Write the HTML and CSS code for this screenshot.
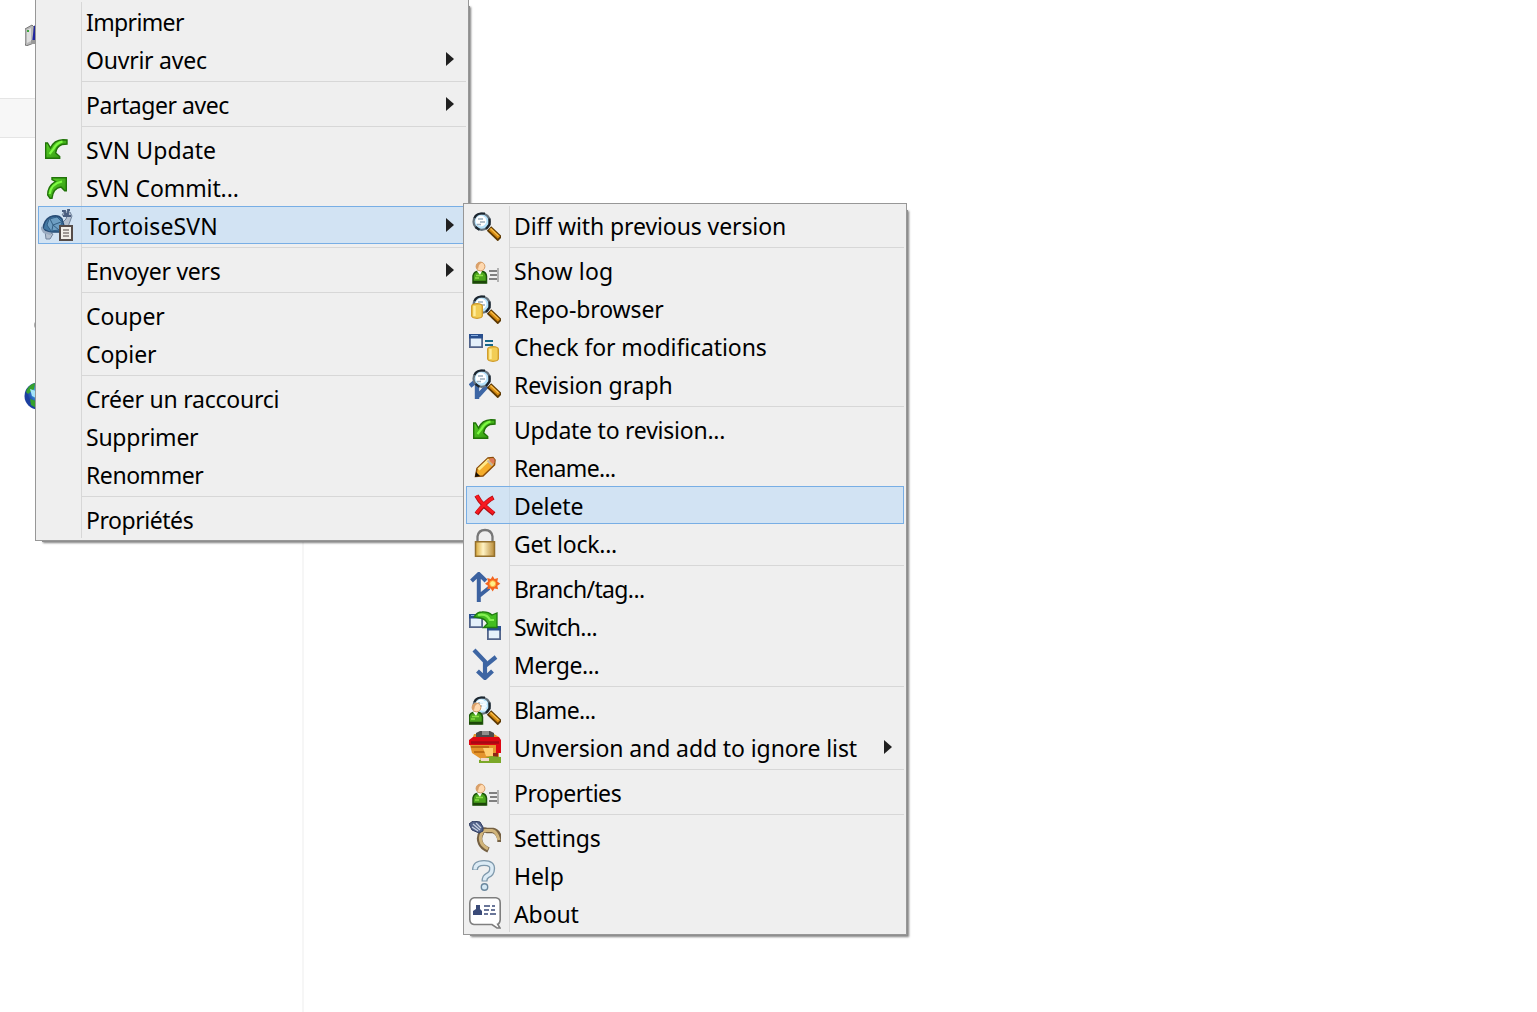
FILE: index.html
```html
<!DOCTYPE html>
<html lang="fr">
<head>
<meta charset="utf-8">
<title>Explorateur</title>
<link rel="stylesheet" href="styles.css">
</head>
<body>
<svg class="defs" width="0" height="0" aria-hidden="true">
  <defs>
    <linearGradient id="gold" x1="0" x2="1"><stop offset="0" stop-color="#d9a93c"/><stop offset=".4" stop-color="#fff3c4"/><stop offset="1" stop-color="#b88a36"/></linearGradient>
    <linearGradient id="leaf" x1="0" x2="1" y1="0" y2="1"><stop offset="0" stop-color="#5fd62c"/><stop offset="1" stop-color="#2b8f0c"/></linearGradient>
    <radialGradient id="globe" cx=".6" cy=".35"><stop offset="0" stop-color="#b9f0ff"/><stop offset=".5" stop-color="#3f9be0"/><stop offset="1" stop-color="#1c3fa0"/></radialGradient>
    <symbol id="lens" viewBox="0 0 32 32">
      <path d="M20 19.500L31 30" stroke="#5d3903" stroke-width="6.400"/>
      <path d="M21 20L30 28.500" stroke="#d68a10" stroke-width="3.400"/>
      <path d="M21.500 19.500L29.500 27" stroke="#f6bd4d" stroke-width="1.200"/>
      <circle cx="12.700" cy="12.700" r="8.200" fill="#b5e2fb" stroke="#66727c" stroke-width="2.200"/>
      <path d="M5.500 9Q7 4.700 12 4.500h4M20.500 9.500v6l-3.500 4.500M6.500 18l4 2.800" fill="none" stroke="#1c262f" stroke-width="2.200"/>
      <circle cx="12" cy="12" r="5.400" fill="#fff"/>
      <path d="M9 10h5M11 13h5M8 15.500h4" stroke="#9badbb" stroke-width="1.300"/>
    </symbol>
    <symbol id="person" viewBox="0 0 32 32">
      <path d="M4 29v-7q1-4 4-4.500h6q3 1 3.500 4.500v7z" fill="#4ba51c" stroke="#1c5608" stroke-width="1.500"/>
      <path d="M4 28h13" stroke="#1c4708" stroke-width="2.500"/>
      <path d="M8 17h5l-2 4z" fill="#fff"/>
      <path d="M7 21.500h7M6 24h4" stroke="#8bdd45" stroke-width="1.700"/>
      <circle cx="11.500" cy="12.500" r="4.400" fill="#ffd9b0" stroke="#d59a62"/>
      <path d="M7 14q-.5-5 4-6h2l-3 3-1 4z" fill="#d9a06a"/>
    </symbol>
    <symbol id="log" viewBox="0 0 32 32">
      <use href="#person" width="32" height="32"/>
      <path d="M20 17h8M21 21h7M20 25h8" stroke="#808080" stroke-width="2"/>
      <path d="M29 14v14" stroke="#b2b2b2" stroke-width="2"/>
    </symbol>
    <symbol id="drum" viewBox="0 0 12 16">
      <path d="M.7 3Q1 1 6 .7Q11 1 11.300 3v10q-.3 2-5.300 2.300Q1 15 .7 13z" fill="#f2cd55" stroke="#cf9a26" stroke-width="1.300"/>
      <path d="M3.500 3v10" stroke="#ffed9c" stroke-width="2.400"/>
    </symbol>
    <symbol id="repo" viewBox="0 0 32 32">
      <use href="#lens" width="32" height="32"/>
      <use href="#drum" x="2" y="11" width="12" height="16"/>
    </symbol>
    <symbol id="win" viewBox="0 0 14 14">
      <path d="M.9.900h12.200v12.200H.9z" fill="#e5f1fb" stroke="#52648a" stroke-width="1.800"/>
      <path d="M0 0h14v4.500H0z" fill="#294f8e"/><path d="M2 1.500h7" stroke="#88aee0"/>
    </symbol>
    <symbol id="check" viewBox="0 0 32 32">
      <use href="#win" y="4" width="14" height="14"/>
      <path d="M16 11h8M16 15h8" stroke="#176789" stroke-width="1.800"/>
      <use href="#drum" x="18" y="16" width="12" height="16"/>
    </symbol>
    <symbol id="graph" viewBox="0 0 32 32">
      <path d="M1 18L7 13M8 11v20M9 28L18 18" fill="none" stroke="#3d66a5" stroke-width="4.400"/>
      <use href="#lens" y="-2" width="32" height="32"/>
    </symbol>
    <symbol id="down" viewBox="0 0 32 32">
      <path d="M4.700 10v15.300h14v-1.800l-4-3.500q.5-6.500 6.300-8.500l5-.5V7l-4-.3Q13 7 9.500 15l-3-5z" fill="url(#leaf)" stroke="#207308" stroke-width="1.400"/>
      <path d="M8.500 21l4-5q3-6 9-7.500" fill="none" stroke="#7dfa42" stroke-width="2.200"/>
    </symbol>
    <symbol id="up" viewBox="0 0 32 32">
      <path d="M11 6.700h14.300v13h-1.600L20 16q-8 1-9 11.300H9L6.700 24q-.2-9 7.800-13.500l-3.500-2z" fill="url(#leaf)" stroke="#207308" stroke-width="1.400"/>
      <path d="M8.700 23q1-10 12.300-12.500" fill="none" stroke="#7dfa42" stroke-width="2.200"/>
    </symbol>
    <symbol id="turtle" viewBox="0 0 32 32">
      <path d="M4 22l1 8h4l3-5zM19 16l6-6 1-3-5-1 2-3h6l2 4-3 8-2 8z" fill="#b4c0cf" stroke="#70839c"/>
      <path d="M21 2h3v3h3V1h2M22 7h8" fill="none" stroke="#4b5f80" stroke-width="1.800"/>
      <path d="M2 20q1-9 7-12 8-3 12 2l2 7-4 6H8z" fill="#4379a4" stroke="#284d76" stroke-width="1.500"/>
      <path d="M8 10l8-2 5 5-3 8-8 1-4-6z" fill="#6e9fc3" stroke="#315f88"/>
      <path d="M9 10l3 6 8-3M12 16l-1 5M12 16l6 5" fill="none" stroke="#345f83"/>
      <path d="M0 18l3 5 7 2" fill="none" stroke="#9aabc0" stroke-width="2.400"/>
      <path d="M19 17h12v14H19z" fill="#f1eee8" stroke="#554c49" stroke-width="2"/>
      <path d="M22 21h6M22 24h6M22 27h6" stroke="#827b77" stroke-width="1.400"/>
    </symbol>
    <symbol id="pencil" viewBox="0 0 32 32">
      <path d="M6.500 25.500l1.500-8L19 7l5-.5 2 2.500-.5 5L14 25z" fill="#f4ac2b" stroke="#8a4b08" stroke-width="1.500"/>
      <path d="M9.500 18.500L20 8.500" stroke="#ffe98a" stroke-width="3"/>
      <path d="M20 9l4 4 1.500-1.500V8L24 7l-3 .5z" fill="#dd7a58"/><path d="M18.500 9.500l5 5" stroke="#c3b3a4" stroke-width="2"/>
      <path d="M6 26l1-5 4 4z" fill="#17100a"/>
    </symbol>
    <symbol id="cross" viewBox="0 0 32 32">
      <path d="M7.500 6.500q3 6 8 10.500t9.500 8M24.500 8.500Q17 12 7.500 25" fill="none" stroke="#b00c12" stroke-width="4.600"/>
      <path d="M7.500 6.500q3 5.500 8 10t9 7.500M24 9Q17 12 7.500 24" fill="none" stroke="#f71920" stroke-width="3"/>
    </symbol>
    <symbol id="lock" viewBox="0 0 32 32">
      <path d="M8.500 15V9.500q1-6.500 7.500-6.500t7.500 6.500V15" fill="none" stroke="#777" stroke-width="2.300"/>
      <path d="M6.500 14.700h19v14.600h-19z" fill="url(#gold)" stroke="#94702d" stroke-width="1.500"/>
    </symbol>
    <symbol id="branch" viewBox="0 0 32 32">
      <path d="M9.800 30V3M2.500 9L9.800 2 17 9M10 24l10-8" fill="none" stroke="#3c62a0" stroke-width="4"/>
      <path d="M23.700 4l1.800 3 3.600-1-.8 3.500 3 2.200-3 2 .8 3.600-3.600-.8-1.800 3-2-3-3.500.8.8-3.600-3-2 3-2.200-.8-3.500 3.500 1z" fill="#f4651e"/>
      <circle cx="23.700" cy="11.700" r="3" fill="#fff08a" stroke="#ffae37"/>
    </symbol>
    <symbol id="switch" viewBox="0 0 32 32">
      <use href="#win" y="4" width="14" height="14"/><use href="#win" x="18" y="16" width="14" height="14"/>
      <path d="M5 7q3-5 8-5 6-.5 10 3l5-2v14.500H14.500l4-4q-2-4.500-7-5.500z" fill="#43bd20" stroke="#1f7b10" stroke-width="1.300"/>
      <path d="M9 5q9-2 12 5h4" fill="none" stroke="#85f052" stroke-width="2.200"/>
    </symbol>
    <symbol id="merge" viewBox="0 0 32 32">
      <path d="M5 2l11 11.500V30M27 9L16 18M8.500 23l7.500 7 7.500-7" fill="none" stroke="#3d65a3" stroke-width="4.200"/>
    </symbol>
    <symbol id="blame" viewBox="0 0 32 32">
      <use href="#lens" width="32" height="32"/><use href="#person" x="-4" y="2" width="32" height="32"/>
      <path d="M11 9.500h7M13 13h5M13 16.500h4" stroke="#eaf7ff" stroke-width="2.500"/>
    </symbol>
    <symbol id="ignore" viewBox="0 0 32 32">
      <path d="M5 3h20l5 3v26H12v-4L3 22 1 14z" fill="#e4942c"/>
      <path d="M7 2l4-2h10l4 2v5H7z" fill="#4d4b4b"/><path d="M13 0h7v4h-7z" fill="#918d8b"/>
      <path d="M4 6h26l2 3v13h-5v-8H0V9z" fill="#de0713"/><path d="M2 11.500h28" stroke="#a60a14" stroke-width="2.500"/>
      <path d="M2 16h18M5 21h11" stroke="#bd6d12" stroke-width="2"/>
      <path d="M14 17h10v8h-7z" fill="#ffcf70"/><path d="M24 22h5v6h-5z" fill="#8f2717"/>
      <path d="M10 29l12-4 10 1v6H10z" fill="#7ba828"/><path d="M12 27h8v3h-8z" fill="#f2d8c9"/>
    </symbol>
    <symbol id="tools" viewBox="0 0 32 32">
      <path d="M11 12Q14 8 18 9.500h6q5 1 7 8.500v3M13 11q-4 5-1.500 11 1.500 4 8 7" fill="none" stroke="#756042" stroke-width="5.400"/>
      <path d="M12 12q2-3 6-2.500h5q5 1 7 9.500M13 12q-3 5-.5 10 1.500 3 6.500 6" fill="none" stroke="#d0b47b" stroke-width="3"/>
      <path d="M0 3l4-3 7 1 3 5v4l-4 2-7-3z" fill="#53638a" stroke="#303c61"/>
      <path d="M4 3l7 6M7 2l5 5M3 6l6 4" stroke="#c8d1e1" stroke-width="1.300"/>
    </symbol>
    <symbol id="help" viewBox="0 0 32 32">
      <path d="M6 11Q6 4 15 4t8 6.500q0 4-4.500 6-3 1.500-3 6" fill="none" stroke="#7e98ab" stroke-width="6"/>
      <path d="M6 10.500Q6 4 15 4t8 6.500q0 4-4.500 6-3 1.500-3 5" fill="none" stroke="#dcebf5" stroke-width="3.400"/>
      <circle cx="15.500" cy="28" r="3.200" fill="#d5e8f4" stroke="#6a879d" stroke-width="1.400"/>
    </symbol>
    <symbol id="about" viewBox="0 0 32 32">
      <path d="M5 .8h22q4.200.7 4.200 5v17q-.5 4-2.500 4.500L31 31h-3l-5-3.500H5q-4-.5-4.200-5V6Q1 1.500 5 .8z" fill="#fff" stroke="#7f7f7f" stroke-width="1.600"/>
      <path d="M4 18v-4l3-2V8h4v4l2 2v4z" fill="#3a4a78"/><path d="M15 9h6M23 9h3M15 13h5M22 13h4M15 17h4M21 17h6" stroke="#3a4a78" stroke-width="1.700"/>
    </symbol>
    <symbol id="arrow" viewBox="0 0 8 14"><path d="M0 0l8 7-8 7z" fill="#202020"/></symbol>
  </defs>
</svg>

<main class="desk">
  <div class="strip"></div>
  <div class="pane-edge"></div>
  <svg class="desk-icon computer" viewBox="0 0 22 22"><path d="M0 5l7-4 2 2v16l-8 3-1-3z" fill="#b8b8b8" stroke="#777"/><path d="M2 6l4-2v13l-4 2z" fill="#dedede"/><path d="M2 7h2" stroke="#3da93d" stroke-width="2"/><path d="M9 2l5-3v20H7z" fill="#2025a0"/><path d="M6 16h7v4H6z" fill="#999"/></svg>
  <svg class="desk-icon disc" viewBox="0 0 8 8"><circle cx="4" cy="4" r="4" fill="#aaa"/></svg>
  <svg class="desk-icon world" viewBox="0 0 28 28"><circle cx="14" cy="14" r="13.500" fill="url(#globe)"/><path d="M2 10Q4 3 11 1l-1 6-6 5zM6 17l6 2v7l-5-3z" fill="#35a12c"/><path d="M6 7l6 2v7l-4-2z" fill="#a4e4fa"/></svg>

  <ul class="menu menu-main">
    <li class="item"><span class="label tight-3">Imprimer</span></li>
    <li class="item"><span class="label tight-1">Ouvrir avec</span><svg class="arrow"><use href="#arrow"/></svg></li>
    <li class="sep"></li>
    <li class="item"><span class="label tight-2">Partager avec</span><svg class="arrow"><use href="#arrow"/></svg></li>
    <li class="sep"></li>
    <li class="item"><svg class="icon"><use href="#down"/></svg><span class="label loose">SVN Update</span></li>
    <li class="item"><svg class="icon"><use href="#up"/></svg><span class="label">SVN Commit...</span></li>
    <li class="item active"><svg class="icon"><use href="#turtle"/></svg><span class="label loose">TortoiseSVN</span><svg class="arrow"><use href="#arrow"/></svg></li>
    <li class="sep"></li>
    <li class="item"><span class="label tight-1">Envoyer vers</span><svg class="arrow"><use href="#arrow"/></svg></li>
    <li class="sep"></li>
    <li class="item"><span class="label">Couper</span></li>
    <li class="item"><span class="label">Copier</span></li>
    <li class="sep"></li>
    <li class="item"><span class="label tight-1">Créer un raccourci</span></li>
    <li class="item"><span class="label tight-1">Supprimer</span></li>
    <li class="item"><span class="label tight-2">Renommer</span></li>
    <li class="sep"></li>
    <li class="item"><span class="label tight-2">Propriétés</span></li>
  </ul>

  <ul class="menu menu-sub">
    <li class="item"><svg class="icon"><use href="#lens"/></svg><span class="label">Diff with previous version</span></li>
    <li class="sep"></li>
    <li class="item"><svg class="icon"><use href="#log"/></svg><span class="label loose">Show log</span></li>
    <li class="item"><svg class="icon"><use href="#repo"/></svg><span class="label">Repo-browser</span></li>
    <li class="item"><svg class="icon"><use href="#check"/></svg><span class="label">Check for modifications</span></li>
    <li class="item"><svg class="icon"><use href="#graph"/></svg><span class="label">Revision graph</span></li>
    <li class="sep"></li>
    <li class="item"><svg class="icon"><use href="#down"/></svg><span class="label tight-1">Update to revision...</span></li>
    <li class="item"><svg class="icon"><use href="#pencil"/></svg><span class="label tight-3">Rename...</span></li>
    <li class="item active"><svg class="icon"><use href="#cross"/></svg><span class="label">Delete</span></li>
    <li class="item"><svg class="icon"><use href="#lock"/></svg><span class="label tight-1">Get lock...</span></li>
    <li class="sep"></li>
    <li class="item"><svg class="icon"><use href="#branch"/></svg><span class="label tight-3">Branch/tag...</span></li>
    <li class="item"><svg class="icon"><use href="#switch"/></svg><span class="label tight-3">Switch...</span></li>
    <li class="item"><svg class="icon"><use href="#merge"/></svg><span class="label tight-2">Merge...</span></li>
    <li class="sep"></li>
    <li class="item"><svg class="icon"><use href="#blame"/></svg><span class="label tight-3">Blame...</span></li>
    <li class="item"><svg class="icon"><use href="#ignore"/></svg><span class="label">Unversion and add to ignore list</span><svg class="arrow"><use href="#arrow"/></svg></li>
    <li class="sep"></li>
    <li class="item"><svg class="icon"><use href="#log"/></svg><span class="label tight-2">Properties</span></li>
    <li class="sep"></li>
    <li class="item"><svg class="icon"><use href="#tools"/></svg><span class="label">Settings</span></li>
    <li class="item"><svg class="icon"><use href="#help"/></svg><span class="label">Help</span></li>
    <li class="item"><svg class="icon"><use href="#about"/></svg><span class="label">About</span></li>
  </ul>
</main>
</body>
</html>
```
FILE: styles.css
```css
* { box-sizing: border-box; }
body { margin: 0; background: #fff; font-family: "Noto Sans", "Open Sans", sans-serif; }
.defs { position: absolute; }
.desk { position: relative; width: 1537px; height: 1012px; overflow: hidden; background: #fff; }
.strip { position: absolute; left: 0; top: 98px; width: 303px; height: 40px; background: #f7f7f7; border: solid #e5e5e5; border-width: 1px 0; }
.pane-edge { position: absolute; left: 302px; top: 0; width: 2px; height: 1012px; background: #f6f6f6; }
.desk-icon { position: absolute; }
.computer { left: 25px; top: 24px; width: 22px; height: 22px; }
.disc { left: 34px; top: 321px; width: 8px; height: 8px; }
.world { left: 24px; top: 382px; width: 28px; height: 28px; }

.menu {
  position: absolute;
  margin: 0;
  padding: 2px;
  list-style: none;
  background: #efefef;
  border: 1px solid #979797;
  box-shadow: 4px 4px 0 -3px #8e8e8e, 5px 5px 2px -3px rgba(0, 0, 0, .5);
}
.menu::before {
  content: "";
  position: absolute;
  left: 45px;
  top: 2px;
  bottom: 2px;
  width: 1px;
  background: #d7d7d7;
}
.menu-main { left: 35px; top: -1px; width: 434px; }
.menu-sub { left: 463px; top: 203px; width: 444px; }

.item {
  position: relative;
  display: grid;
  grid-template-columns: 32px 1fr 8px;
  column-gap: 13px;
  align-items: center;
  height: 38px;
  padding: 0 12px 0 3px;
}
.active { background: rgba(185, 217, 245, .55); box-shadow: inset 0 0 0 1px #78aee5; }
.icon { grid-column: 1; width: 32px; height: 32px; overflow: visible; }
.label { grid-column: 2; height: 38px; padding-top: 1px; color: #000; font-size: 23px; line-height: 38px; letter-spacing: -.1px; white-space: nowrap; }
.label.loose { letter-spacing: .1px; }
.label.tight-1 { letter-spacing: -.24px; }
.label.tight-2 { letter-spacing: -.45px; }
.label.tight-3 { letter-spacing: -.64px; }
.arrow { grid-column: 3; width: 8px; height: 14px; }
.sep { height: 7px; padding: 3px 0 0 43px; }
.sep::after { content: ""; display: block; height: 1px; background: #d7d7d7; }
```
